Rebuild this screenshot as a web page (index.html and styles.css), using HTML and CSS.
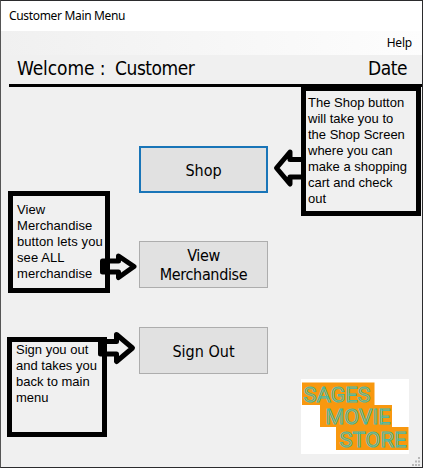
FILE: index.html
```html
<!DOCTYPE html>
<html lang="en">
<head>
<meta charset="utf-8">
<title>Customer Main Menu</title>
<link rel="stylesheet" href="styles.css">
</head>
<body>
<div class="window">
  <div class="titlebar">Customer Main Menu</div>
  <nav class="menubar"><span>Help</span></nav>
  <header class="welcome">
    <span class="greeting">Welcome :</span><span class="name">Customer</span><span class="date">Date</span>
  </header>
  <main class="content">
    <section class="notes">
      <div class="note note-view">View<br>Merchandise<br>button lets you<br>see ALL<br>merchandise</div>
      <div class="note note-sign">Sign you out<br>and takes you<br>back to main<br>menu</div>
    </section>
    <section class="actions">
      <button class="btn btn-shop">Shop</button>
      <button class="btn btn-view">View<br>Merchandise</button>
      <button class="btn btn-sign">Sign Out</button>
    </section>
    <section class="side">
      <div class="note note-shop">The Shop button<br>will take you to<br>the Shop Screen<br>where you can<br>make a shopping<br>cart and check<br>out</div>
      <svg class="logo" width="108" height="75" viewBox="0 0 108 75">
        <rect width="108" height="75" fill="#fff"/>
        <path d="M1 3.500H73.500V26H91V48H107.500V71H35V48H19V26H1Z" fill="#f8980f"/>
        <g class="logo-text">
          <text x="2.500" y="22.500" textLength="67" lengthAdjust="spacingAndGlyphs">SAGES</text>
          <text x="24.500" y="45" textLength="65" lengthAdjust="spacingAndGlyphs">MOVIE</text>
          <text x="38.500" y="67.500" textLength="67" lengthAdjust="spacingAndGlyphs">STORE</text>
        </g>
      </svg>
    </section>
  </main>
  <svg class="arrows" width="423" height="468" viewBox="0 0 423 468">
    <path d="M303 159.500H290V152L276.500 168L290 184V177H303"/>
    <path d="M102.500 261H118.500V256L134 266.500L118.500 277.500V272H102.500Z"/>
    <path d="M100.500 341.500H116.500V334.500L132.500 348L116.500 361.500V354H100.500Z"/>
    <path class="wall" d="M107.500 258V275M104.500 338V357M303.500 157V180"/>
  </svg>
  <svg class="grip" width="10" height="10" viewBox="0 0 10 10">
    <path d="M7 0h2v2h-2zM4 3.500h2v2h-2zM7 3.500h2v2h-2zM1 7h2v2h-2zM4 7h2v2h-2zM7 7h2v2h-2z" fill="#b8b8b8"/>
  </svg>
</div>
</body>
</html>
```
FILE: styles.css
```css
* { box-sizing: border-box; }
body { margin: 0; }
.window {
  position: relative;
  width: 423px;
  height: 468px;
  overflow: hidden;
  border: 1px solid #2b2b2d;
  border-left-color: #555;
  background: #f0f0f0;
  color: #000;
  font-family: "Noto Sans", sans-serif;
}
.titlebar {
  height: 30px;
  padding-left: 8px;
  background: #fff;
  font-size: 12px;
  letter-spacing: -0.33px;
  line-height: 30px;
}
.menubar {
  display: flex;
  justify-content: flex-end;
  height: 24px;
  padding-right: 10px;
  background: linear-gradient(90deg, #f0f0f0, #fdfdfd);
  font-size: 12px;
  letter-spacing: -0.2px;
  line-height: 24px;
}
.welcome {
  display: flex;
  height: 32px;
  margin-left: 8px;
  padding: 0 15px 0 8px;
  border-bottom: 3px solid #000;
  font-family: "DejaVu Sans Condensed", "DejaVu Sans", sans-serif;
  font-stretch: condensed;
  font-size: 19px;
  letter-spacing: -0.45px;
  line-height: 27px;
  white-space: nowrap;
}
.greeting { width: 98px; letter-spacing: -0.1px; }
.date { margin-left: auto; }
.content {
  display: grid;
  grid-template-columns: 138px 162px 120px;
  height: 379px;
}
.notes { padding: 104px 0 0 6px; }
.note {
  border: 5px solid #000;
  font-family: "Liberation Sans", Arial, sans-serif;
  font-size: 13px;
  line-height: 16px;
  white-space: nowrap;
}
.note-view {
  width: 102px;
  height: 102px;
  margin-left: 1px;
  padding: 6px 0 0 4px;
  letter-spacing: 0.08px;
}
.note-sign {
  width: 100px;
  height: 100px;
  margin-top: 44px;
  padding: 0 0 0 4px;
}
.note-shop {
  width: 120px;
  height: 130px;
  margin-top: -1px;
  padding: 4px 0 0 2px;
}
.actions { padding-top: 59px; }
.btn {
  display: block;
  width: 129px;
  height: 47px;
  padding: 1px 0 0;
  border: 1px solid #adadad;
  background: #e1e1e1;
  color: #000;
  font-family: "DejaVu Sans Condensed", "DejaVu Sans", sans-serif;
  font-stretch: condensed;
  font-size: 16px;
  letter-spacing: -0.35px;
  line-height: 19px;
}
.btn-shop { border: 2px solid #1975b8; letter-spacing: 0; }
.btn-view { margin-top: 48px; padding: 0; }
.btn-sign { margin-top: 39px; letter-spacing: 0; }
.logo { display: block; margin-top: 163px; }
.logo-text {
  fill: #d5a33e;
  stroke: #48b9a5;
  stroke-width: 0.9;
  font-family: Roboto, sans-serif;
  font-size: 21px;
}
.arrows {
  position: absolute;
  top: -1px;
  left: -1px;
  fill: #f0f0f0;
  stroke: #000;
  stroke-width: 5;
  stroke-linejoin: round;
}
.arrows .wall { fill: none; }
.grip { position: absolute; right: 1px; bottom: 0; }
```
